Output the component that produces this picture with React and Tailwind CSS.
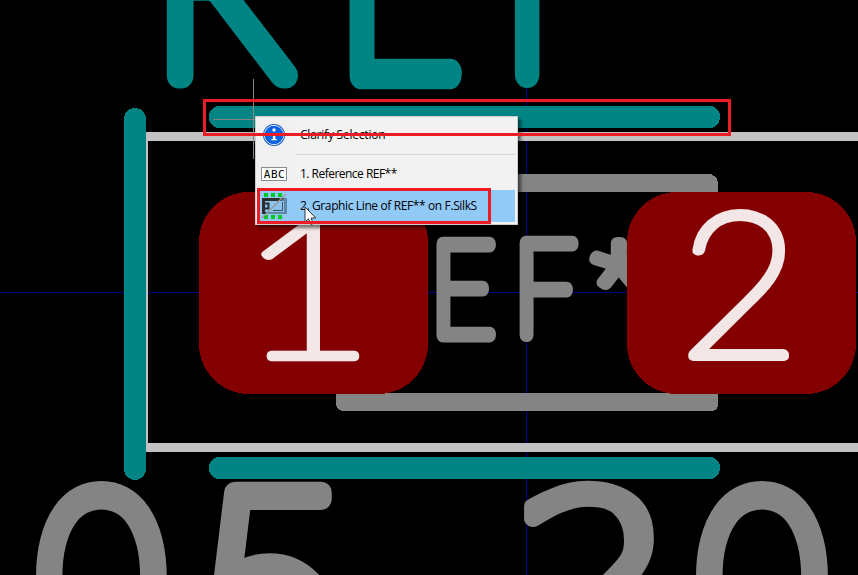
import { useMemo } from "react";

const TEAL = "#008484";
const GRAY = "#848484";

// Fits the ink of one character into the box [left, top, right, bottom],
// leaving room for the plotted line width around it.
function BoardChar({ char, box, line, color, family = "Lato", weight = 100 }) {
  const t = useMemo(() => {
    const ctx = document.createElement("canvas").getContext("2d");
    ctx.font = `${weight} 200px "${family}"`;
    const m = ctx.measureText(char);
    const w = m.actualBoundingBoxRight + m.actualBoundingBoxLeft;
    const h = m.actualBoundingBoxAscent + m.actualBoundingBoxDescent;
    const [l, top, r, b] = box;
    const sx = (r - l - line) / w;
    const sy = (b - top - line) / h;
    return {
      sx,
      sy,
      x: l + line / 2 + m.actualBoundingBoxLeft * sx,
      y: top + line / 2 + m.actualBoundingBoxAscent * sy,
    };
  }, [char, box, line, family, weight]);
  return (
    <text
      transform={`translate(${t.x} ${t.y}) scale(${t.sx} ${t.sy})`}
      fontFamily={`"${family}", sans-serif`}
      fontSize="200"
      fontWeight={weight}
      fill={color}
      stroke={color}
      strokeWidth={line}
      strokeLinejoin="round"
      strokeLinecap="round"
      vectorEffect="non-scaling-stroke"
    >
      {char}
    </text>
  );
}

const SILK = [
  { char: "R", box: [166, -120, 299, 88] },
  { char: "E", box: [348, -126, 464, 88] },
  { char: "F", box: [513, -150, 634, 88] },
];
const VALUE = [
  { char: "0", box: [35, 480, 168, 676], line: 25 },
  { char: "5", box: [207, 481, 339, 700], line: 22, family: "Inter" },
  { char: "2", box: [521, 481, 663, 676], line: 17, family: "DejaVu Sans", weight: 200 },
  { char: "0", box: [695, 480, 829, 676], line: 25 },
];
const FAB = [
  { char: "E", box: [436, 236, 497, 342] },
  { char: "F", box: [519, 236, 579, 342] },
];

function Board() {
  return (
    <svg className="absolute inset-0" width="858" height="575" viewBox="0 0 858 575">
      <g shapeRendering="crispEdges">
        <rect x="0" y="292" width="858" height="1" fill="#000084" />
        <rect x="526" y="0" width="1" height="575" fill="#000084" />
        <rect x="146" y="132" width="712" height="9" fill="#c2c2c2" />
        <rect x="146" y="443" width="712" height="9" fill="#c2c2c2" />
        <rect x="146" y="132" width="2" height="320" fill="#c2c2c2" />
        <path d="M336 174H711L716 177L718 182V192H336Z" fill={GRAY} />
        <path d="M336 393H718V406Q717 411 711 411H343Q337 410 336 404Z" fill={GRAY} />
      </g>
      {SILK.map((c, i) => <BoardChar key={i} {...c} line={25} color={TEAL} />)}
      {VALUE.map((c, i) => <BoardChar key={i} {...c} color={GRAY} />)}
      {FAB.map((c, i) => <BoardChar key={i} {...c} line={13.5} color={GRAY} />)}
      <BoardChar char="*" box={[589, 236, 648, 290]} line={12.5} color={GRAY} family="Roboto" />
      <g shapeRendering="crispEdges">
        <rect x="209" y="106" width="511" height="22" rx="10" fill={TEAL} />
        <rect x="209" y="457" width="511" height="22" rx="10" fill={TEAL} />
        <rect x="124" y="108" width="22" height="372" rx="11" fill={TEAL} />
        <rect x="199" y="192" width="229" height="202" rx="50" fill="#840000" />
        <rect x="627" y="192" width="229" height="202" rx="50" fill="#840000" />
      </g>
      <BoardChar char="1" box={[261, 214, 359, 362]} line={9.5} color="#f3e6e6" />
      <BoardChar char="2" box={[688, 209, 789, 362]} line={10} color="#f3e6e6" />
      <rect x="253" y="79" width="1" height="80" fill="#848484" />
      <rect x="213" y="119" width="42" height="1" fill="#848484" />
    </svg>
  );
}

function InfoIcon() {
  return (
    <svg width="24" height="24" viewBox="0 0 24 24">
      <circle cx="12" cy="12" r="11" fill="#1b5fc4" />
      <circle cx="12" cy="12" r="9.6" fill="none" stroke="#e4eefc" strokeWidth="1" />
      <circle cx="12" cy="12" r="9" fill="#0a62e6" />
      <circle cx="12" cy="7" r="1.7" fill="#fff" />
      <path d="M9.5 10H13.3V16H14.8V17.3H9.3V16H10.9V11.2H9.5Z" fill="#fff" />
    </svg>
  );
}

function FootprintIcon() {
  return (
    <svg className="shrink-0" width="26" height="28" viewBox="0 0 26 28">
      <path
        fill="#00c81e"
        d="M3 1h4v4H3zM10 1h4v4h-4zM17 1h4v4h-4zM3 23h4v4H3zM10 23h4v4h-4zM17 23h4v4h-4z"
      />
      <rect x="1" y="6" width="25" height="16" fill="#5f87a5" />
      <path d="M1 6H23L20 9H4V19H7L4 22H1Z" fill="#2b2d30" />
      <rect x="4" y="9" width="19" height="11" fill="#8cc3ee" />
      <path d="M12 18.5H21.5V10" fill="none" stroke="#34536a" />
      <path d="M4 11.5H7.5V16.5H4" fill="none" stroke="#2b2d30" strokeWidth="2" />
      <path d="M1 26L25 2" stroke="#999" strokeWidth="1.5" />
    </svg>
  );
}

function MenuItem({ icon, label, className }) {
  return (
    <div className={`flex items-center ${className}`}>
      <div className="flex w-[39px] shrink-0 items-center pl-[5px]">{icon}</div>
      <span className="ml-[5px] whitespace-nowrap text-[12px] leading-4">{label}</span>
    </div>
  );
}

function ContextMenu() {
  return (
    <div className="absolute left-[255px] top-[116px] flex h-[109px] w-[263px] flex-col border border-[#cccccc] bg-[linear-gradient(to_right,#f0f0f0_40px,#f2f2f2_40px)] font-['Open_Sans','Noto_Sans',sans-serif] text-black shadow-[3px_3px_3px_rgba(0,0,0,0.5)]">
      <MenuItem className="mt-[2px] h-8 tracking-[-0.22px]" icon={<div className="ml-[1px]"><InfoIcon /></div>} label="Clarify Selection" />
      <div className="ml-[40px] mr-[2px] mt-[3px] h-px bg-[#d5d5d5]" />
      <MenuItem
        className="mt-[3px] h-8 tracking-[-0.52px]"
        icon={
          <div className="flex h-[14px] w-[26px] items-center justify-center border border-[#8c8c8c] bg-white pl-px font-['DejaVu_Sans_Mono',monospace] text-[11px] leading-none tracking-[0.5px]">
            ABC
          </div>
        }
        label="1. Reference REF**"
      />
      <MenuItem className="mx-[2px] h-8 bg-[#91c9f7] -indent-[2px] tracking-[-0.38px]" icon={<div className="-ml-[2px]"><FootprintIcon /></div>} label="2. Graphic Line of REF** on F.SilkS" />
    </div>
  );
}

export default function App() {
  return (
    <div className="relative h-[575px] w-[858px] overflow-hidden bg-black">
      <Board />
      <ContextMenu />
      <svg className="absolute left-[304px] top-[206px]" width="14" height="21" viewBox="0 0 14 21">
        <path d="M1 1V16L4.5 12.8L7 18.5L9.3 17.5L7 12H11.8Z" fill="#fff" stroke="#222" strokeWidth="0.9" />
      </svg>
      <div className="absolute left-[203px] top-[99px] h-[37px] w-[528px] border-[3px] border-[#ed1c24]" />
      <div className="absolute left-[257px] top-[188px] h-[36px] w-[234px] border-[3px] border-[#ed1c24]" />
    </div>
  );
}
